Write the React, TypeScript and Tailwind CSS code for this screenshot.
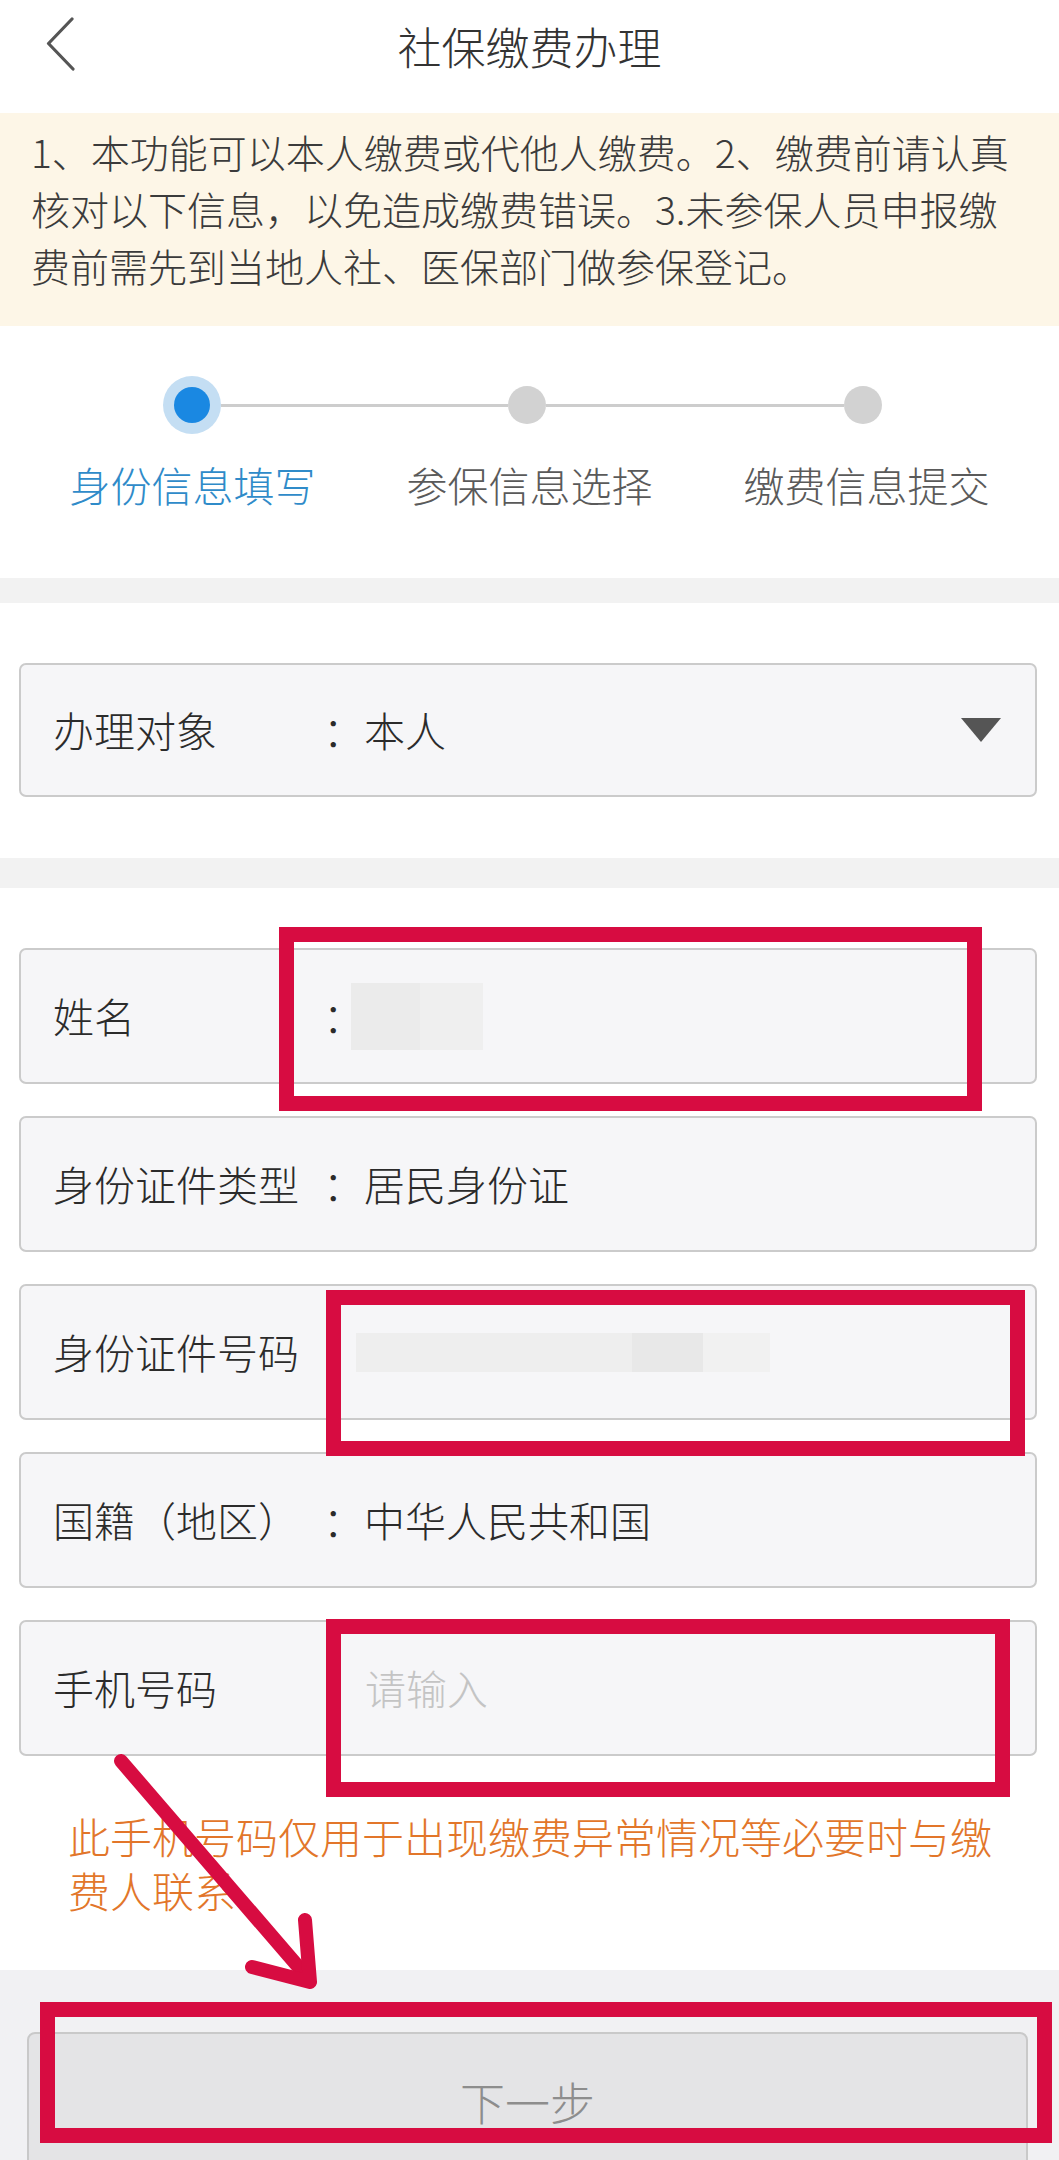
import React from "react";

const rows = [
  { label: "姓名", kind: "name" },
  { label: "身份证件类型", kind: "text", value: "居民身份证" },
  { label: "身份证件号码", kind: "id" },
  { label: "国籍（地区）", kind: "text", value: "中华人民共和国" },
  { label: "手机号码", kind: "phone" },
];

function Value({ kind, value }: { kind: string; value?: string }) {
  if (kind === "name") {
    return (
      <div className="flex -ml-[13px]">
        <div className="w-[69px] h-[67px] bg-[#ebebeb]" />
        <div className="w-[63px] h-[67px] bg-[#efefef]" />
      </div>
    );
  }
  if (kind === "id") {
    return (
      <div className="flex -ml-[8px]">
        <div className="w-[276px] h-[39px] bg-[#eeeeee]" />
        <div className="w-[71px] h-[39px] bg-[#e8e8e8]" />
        <div className="w-[67px] h-[39px] bg-[#f1f1f1]" />
      </div>
    );
  }
  return <span className="text-[#2b2b2b]">{value}</span>;
}

export default function App() {
  return (
    <div className="relative w-[1059px] h-[2160px] overflow-hidden bg-white font-light font-['Noto_Sans_CJK_SC','Noto_Sans',sans-serif]">
      {/* header */}
      <div className="h-[113px] grid grid-cols-[1fr_auto_1fr] items-start">
        <div className="pl-[46px] pt-[17px]">
          <svg width="30" height="54" viewBox="0 0 30 54" fill="none">
            <path d="M26 2 L2.5 26.5 L27 52" stroke="#555" strokeWidth="3.2" strokeLinecap="round" strokeLinejoin="round" />
          </svg>
        </div>
        <div className="pt-[22px] text-[44px] leading-[48px] text-[#333]">社保缴费办理</div>
        <div />
      </div>

      {/* notice */}
      <div className="h-[213px] bg-[#fdf6e7] pl-[31px] pt-[10px] text-[39px] leading-[57px] text-[#3b3b3b]">
        <div className="whitespace-nowrap">1、本功能可以本人缴费或代他人缴费。2、缴费前请认真</div>
        <div className="whitespace-nowrap">核对以下信息，以免造成缴费错误。3.未参保人员申报缴</div>
        <div className="whitespace-nowrap">费前需先到当地人社、医保部门做参保登记。</div>
      </div>

      {/* stepper */}
      <div className="h-[252px] pt-[50px]">
        <div className="h-[58px] flex items-center pl-[163px]">
          <div className="w-[58px] h-[58px] rounded-full bg-[#c4def3] flex items-center justify-center">
            <div className="w-[36px] h-[36px] rounded-full bg-[#1a88e2]" />
          </div>
          <div className="h-[3px] w-[287px] bg-[#cdcdcd]" />
          <div className="w-[38px] h-[38px] rounded-full bg-[#d2d2d2]" />
          <div className="h-[3px] w-[298px] bg-[#cdcdcd]" />
          <div className="w-[38px] h-[38px] rounded-full bg-[#d2d2d2]" />
        </div>
        <div className="mt-[25px] grid grid-cols-3 px-[24px] text-[41px] leading-[50px] text-center">
          <div className="text-[#2f8bc9]">身份信息填写</div>
          <div className="text-[#5a5a5a]">参保信息选择</div>
          <div className="text-[#5a5a5a]">缴费信息提交</div>
        </div>
      </div>

      <div className="h-[25px] bg-[#f2f2f2]" />

      {/* select */}
      <div className="h-[255px] pt-[60px] pl-[19px] pr-[22px]">
        <div className="h-[134px] border-2 border-[#cbcbcb] rounded-[7px] bg-[#f6f6f8] flex items-center pl-[32px] pr-[34px] text-[41px] text-[#2b2b2b]">
          <span className="w-[270px]">办理对象</span>
          <span className="w-[41px]">：</span>
          <span>本人</span>
          <svg className="ml-auto" width="40" height="24" viewBox="0 0 40 24">
            <polygon points="0,0 40,0 20,24" fill="#555" />
          </svg>
        </div>
      </div>

      <div className="h-[30px] bg-[#f2f2f2]" />

      {/* form */}
      <div className="pt-[60px] pb-[53px] pl-[19px] pr-[22px]">
        <div className="flex flex-col gap-[32px]">
          {rows.map((r) => (
            <div
              key={r.label}
              className="h-[136px] border-2 border-[#cbcbcb] rounded-[7px] bg-[#f6f6f8] flex items-center pl-[32px] text-[41px] text-[#2b2b2b]"
            >
              <span className="w-[270px] whitespace-nowrap">{r.label}</span>
              {r.kind === "phone" ? (
                <span className="pl-[42px] text-[#c4c4c4]">请输入</span>
              ) : (
                <>
                  <span className="w-[41px]">：</span>
                  <Value kind={r.kind} value={r.value} />
                </>
              )}
            </div>
          ))}
        </div>
        <div className="mt-[53px] pl-[49px] text-[42px] leading-[54px] text-[#e2762a]">
          <div className="whitespace-nowrap">此手机号码仅用于出现缴费异常情况等必要时与缴</div>
          <div>费人联系</div>
        </div>
      </div>

      {/* bottom */}
      <div className="bg-[#f1f1f3] pt-[62px] pl-[27px] pb-[40px]">
        <button className="w-[1001px] h-[140px] border-2 border-[#c9c9c9] rounded-[8px] bg-[#e4e4e6] text-[45px] text-[#8d8d8d] flex items-center justify-center">
          下一步
        </button>
      </div>

      {/* annotations */}
      <div className="absolute left-[279px] top-[927px] w-[703px] h-[184px] border-[15px] border-[#d70c41]" />
      <div className="absolute left-[326px] top-[1290px] w-[699px] h-[166px] border-[15px] border-[#d70c41]" />
      <div className="absolute left-[326px] top-[1619px] w-[684px] h-[178px] border-[15px] border-[#d70c41]" />
      <div className="absolute left-[40px] top-[2002px] w-[1012px] h-[141px] border-[15px] border-[#d70c41]" />
      <svg className="absolute left-[100px] top-[1740px]" width="240" height="260" viewBox="0 0 240 260" fill="none">
        <path d="M21 21 L208 238" stroke="#d70c41" strokeWidth="14" strokeLinecap="round" />
        <path d="M152 227 L210 242 L205 180" stroke="#d70c41" strokeWidth="14" strokeLinecap="round" strokeLinejoin="round" />
      </svg>
    </div>
  );
}
